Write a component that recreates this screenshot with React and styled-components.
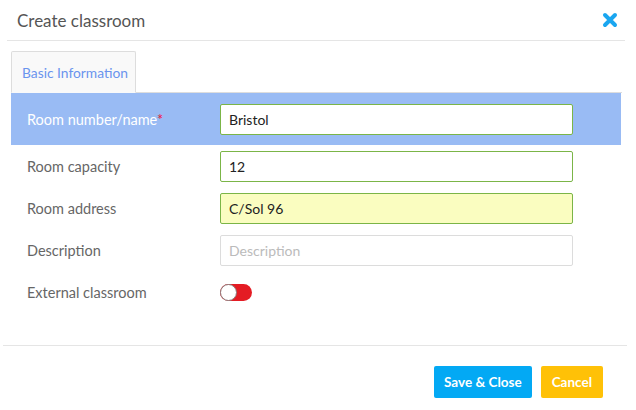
import React from "react";
import styled, { createGlobalStyle } from "styled-components";

const Global = createGlobalStyle`
  * { box-sizing: border-box; }
  html, body { margin: 0; padding: 0; background: #fff; }
  body { font-family: Lato, "Open Sans", sans-serif; }
`;

const Modal = styled.div`
  width: 636px;
  height: 410px;
  background: #fff;
  display: flex;
  flex-direction: column;
`;

const Header = styled.div`
  height: 41px;
  margin: 0 11px 0 7px;
  padding: 0 10px;
  border-bottom: 1px solid #e5e5e5;
  display: flex;
  align-items: center;
  justify-content: space-between;
`;

const Title = styled.h1`
  margin: 0;
  font-size: 17px;
  font-weight: 400;
  color: #555;
`;

const Close = styled.button`
  border: 0;
  background: none;
  padding: 0;
  margin-right: -3px;
  width: 16px;
  height: 16px;
  display: flex;
  cursor: pointer;
`;

const Body = styled.div`
  padding: 10px 14px 0 11px;
  flex: 1;
`;

const Tabs = styled.div`
  display: flex;
  border-bottom: 1px solid #ddd;
`;

const Tab = styled.div`
  width: 125px;
  height: 42px;
  margin-bottom: -1px;
  border: 1px solid #ddd;
  border-bottom: 1px solid #f9f9f9;
  border-radius: 2px 2px 0 0;
  background: #f9f9f9;
  color: #6a94ee;
  font-size: 13.8px;
  padding-left: 10px;
  display: flex;
  align-items: center;
`;

const Form = styled.div`
  display: flex;
  flex-direction: column;
  width: 610px;
`;

const Row = styled.div`
  display: flex;
  align-items: center;
  height: ${(p) => p.$h || 42}px;
  background: ${(p) => (p.$active ? "#99bbf4" : "transparent")};
  padding-left: 16px;
`;

const Label = styled.label`
  width: 193px;
  font-size: 14.5px;
  color: ${(p) => (p.$active ? "#fff" : "#666")};
`;

const Star = styled.span`
  color: #e8173a;
`;

const Input = styled.input`
  width: 353px;
  height: 31px;
  border: 1px solid ${(p) => (p.$valid ? "#7bb547" : "#dcdcdc")};
  border-radius: 2px;
  background: ${(p) => p.$bg || "#fff"};
  padding: 0 8px;
  font-family: Lato, "Open Sans", sans-serif;
  font-size: 14px;
  color: #222;
  outline: none;
  &::placeholder { color: #bbb; }
`;

const Toggle = styled.div`
  width: 32px;
  height: 17px;
  border-radius: 9px;
  background: #e41c24;
  position: relative;
`;

const Knob = styled.span`
  position: absolute;
  left: 0;
  top: 0;
  width: 17px;
  height: 17px;
  border-radius: 50%;
  background: #fff;
  border: 1px solid #8a7a7a;
`;

const Footer = styled.div`
  margin: 0 9px 0 3px;
  border-top: 1px solid #e5e5e5;
  height: 65px;
  display: flex;
  align-items: flex-start;
  justify-content: flex-end;
  padding: 20px 24px 0 0;
  gap: 9px;
`;

const Button = styled.button`
  height: 32px;
  border: 0;
  border-radius: 2px;
  padding: 0 ${(p) => p.$px || 12}px;
  background: ${(p) => p.$bg};
  color: #fff;
  font-family: Lato, "Open Sans", sans-serif;
  font-weight: 700;
  font-size: 13.5px;
  cursor: pointer;
`;

export default function App() {
  return (
    <>
      <Global />
      <Modal>
        <Header>
          <Title>Create classroom</Title>
          <Close aria-label="close">
            <svg width="16" height="16" viewBox="0 0 16 16">
              <path d="M3 3 L13 13 M13 3 L3 13" stroke="#1aa6f0" strokeWidth="4" strokeLinecap="round" />
            </svg>
          </Close>
        </Header>
        <Body>
          <Tabs>
            <Tab>Basic Information</Tab>
          </Tabs>
          <Form>
            <Row $active $h={52}>
              <Label $active>Room number/name<Star>*</Star></Label>
              <Input $valid defaultValue="Bristol" />
            </Row>
            <Row $h={42}>
              <Label>Room capacity</Label>
              <Input $valid defaultValue="12" />
            </Row>
            <Row $h={42}>
              <Label>Room address</Label>
              <Input $valid $bg="#fafdc0" defaultValue="C/Sol 96" />
            </Row>
            <Row $h={42}>
              <Label>Description</Label>
              <Input placeholder="Description" />
            </Row>
            <Row $h={42}>
              <Label>External classroom</Label>
              <Toggle><Knob /></Toggle>
            </Row>
          </Form>
        </Body>
        <Footer>
          <Button $bg="#03a9f4" $px={10}>Save &amp; Close</Button>
          <Button $bg="#ffc107" $px={11}>Cancel</Button>
        </Footer>
      </Modal>
    </>
  );
}
